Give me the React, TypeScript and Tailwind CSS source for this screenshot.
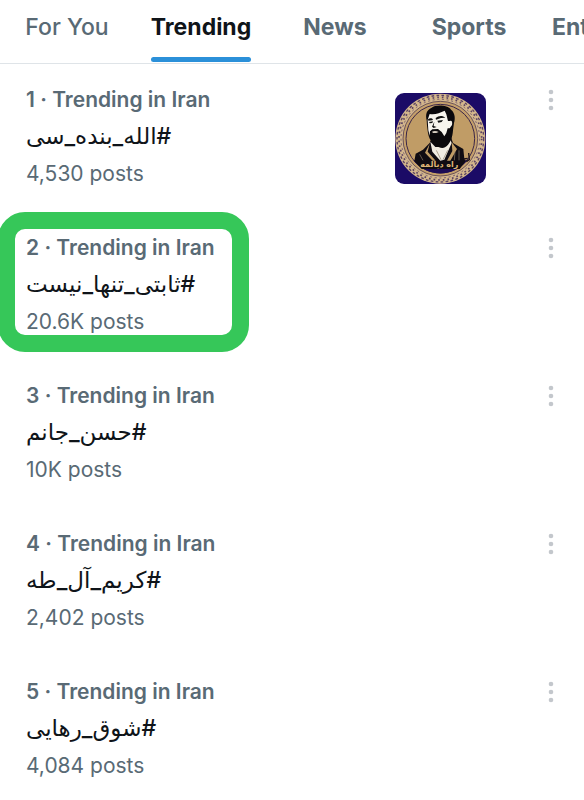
import clsx from 'clsx'

const tabs = ['For You', 'Trending', 'News', 'Sports', 'Entertainment']

const trends = [
  { tag: '#الله_بنده_سی', posts: '4,530 posts', badge: true },
  { tag: '#ثابتی_تنها_نیست', posts: '20.6K posts', marked: true },
  { tag: '#حسن_جانم', posts: '10K posts' },
  { tag: '#کریم_آل_طه', posts: '2,402 posts' },
  { tag: '#شوق_رهایی', posts: '4,084 posts' },
]

function Emblem() {
  return (
    <svg viewBox="0 0 273 273" role="img" aria-label="راه دیالمه" className="mt-3 size-[91px] shrink-0 rounded-[9px]">
      <rect width="273" height="273" fill="#1b0b66" />
      {/* ornamental ring */}
      <circle cx="136" cy="137" r="135" fill="#d3b68c" />
      <circle cx="136" cy="137" r="130" fill="none" stroke="#5a4262" strokeWidth="4" strokeDasharray="8 7" />
      <circle cx="136" cy="137" r="124" fill="none" stroke="#5a4262" strokeWidth="5" strokeDasharray="5 9" />
      <circle cx="136" cy="137" r="118" fill="none" stroke="#7a6070" strokeWidth="3" strokeDasharray="6 8" />
      <circle cx="136" cy="137" r="112" fill="#c5a06b" stroke="#3a2548" strokeWidth="2" />
      <circle cx="136" cy="137" r="103" fill="#c09c66" stroke="#3a2548" strokeWidth="3" />
      <path d="M55 202 H217 A103 103 0 0 1 55 202 Z" fill="#1b0b55" />
      {/* jacket and shirt */}
      <path d="M58 204 L62 182 L84 170 L104 150 L112 128 L166 126 L174 150 L205 168 L208 198 L212 204 L194 228 L80 228 Z" fill="#100c12" />
      <path d="M106 146 L121 162 L146 162 L166 140 L170 150 L148 200 L136 203 L112 176 Z" fill="#f1ece2" />
      <path d="M104 152 L98 176 L122 203 L113 203 L90 179 Z M170 148 L186 168 L166 203 L156 203 L172 174 Z" fill="#c09c66" />
      <path d="M124 172 L138 200 M158 172 L144 200 M74 184 L84 202 M180 176 L178 202 M192 172 L192 202" fill="none" stroke="#8d7b66" strokeWidth="2" />
      {/* hair and beard */}
      <path d="M95 82 C91 64 94 52 110 44 C122 34 158 36 168 50 C181 60 181 78 177 90 L174 112 C173 132 166 154 150 163 C138 170 116 158 107 142 C99 130 98 112 96 98 Z" fill="#0b090c" />
      {/* face */}
      <path d="M98 80 L104 63 C120 66 134 60 149 53 L154 64 L159 84 L165 84 C170 81 173 87 171 96 L164 106 L158 106 L154 120 L148 130 L140 117 L129 108 L112 109 L105 115 L104 128 L100 112 Z" fill="#f7f4ed" />
      <path d="M99 79 C104 74 111 75 114 79 L112 82 L100 83 Z M122 75 C131 67 143 67 151 74 L138 75 L123 80 Z M102 87 L114 85 L112 90 L104 91 Z M127 83 L144 81 L140 87 L130 89 Z M118 86 L111 101 L116 105 L125 102 L116 99 Z" fill="#111" />
      <path d="M111 116 C118 113 125 114 131 117 L124 120 L114 120 Z" fill="#d8cfc2" />
      <path d="M206 198 L218 196 M221 180 L223 200 L214 206" fill="none" stroke="#1b121a" strokeWidth="4" />
      <text x="133" y="222" direction="rtl" textAnchor="middle" fontSize="24" fontWeight="700" fontFamily="DejaVu Sans, sans-serif" fill="#dfb577">راه دیالمه</text>
    </svg>
  )
}

function MoreButton() {
  return (
    <button type="button" aria-label="More" className="mt-2 shrink-0 text-[#c3c7cc]">
      <svg viewBox="0 0 6 22" className="h-[22px] w-[6px]" fill="currentColor">
        <circle cx="3" cy="3" r="2.3" />
        <circle cx="3" cy="11" r="2.3" />
        <circle cx="3" cy="19" r="2.3" />
      </svg>
    </button>
  )
}

export default function App() {
  return (
    <main className="min-h-screen overflow-hidden bg-white font-['Inter','DejaVu_Sans',sans-serif] text-[#596a75]">
      <nav className="flex overflow-hidden border-b border-[#dfe4e8] text-[23px] leading-8">
        {tabs.map((tab) => {
          const active = tab === 'Trending'
          return (
            <button
              key={tab}
              type="button"
              aria-current={active ? 'page' : undefined}
              className={clsx(
                'flex h-[63px] min-w-[134px] shrink-0 justify-center px-4',
                tab === 'For You' ? 'font-medium' : 'font-bold',
                active && 'text-[#0f1419]'
              )}
            >
              <span className="flex h-[62px] flex-col justify-between pt-[11px]">
                {tab}
                {active && <span className="h-[5px] rounded-full bg-[#2b90d9]" />}
              </span>
            </button>
          )
        })}
      </nav>

      <ol className="flex flex-col gap-[37px] pt-[17px] pr-[30px] pl-[26px]">
        {trends.map((trend, i) => (
          <li key={trend.tag} className="relative flex h-[111px] items-start text-[21px] leading-[37px]">
            {trend.marked && (
              <div className="pointer-events-none absolute -top-[17px] -left-[28px] h-[140px] w-[251px] rounded-[27px] border-[17px] border-[#36c759]" />
            )}
            <a href="#" className="flex-1">
              <p className="font-semibold">{i + 1} · Trending in Iran</p>
              <p lang="fa" dir="rtl" className="text-left text-[23px] font-medium text-[#0f1419]">{trend.tag}</p>
              <p>{trend.posts}</p>
            </a>
            {trend.badge && <Emblem />}
            <div className={clsx('flex shrink-0', trend.badge && 'pl-[62px]')}>
              <MoreButton />
            </div>
          </li>
        ))}
      </ol>
    </main>
  )
}
